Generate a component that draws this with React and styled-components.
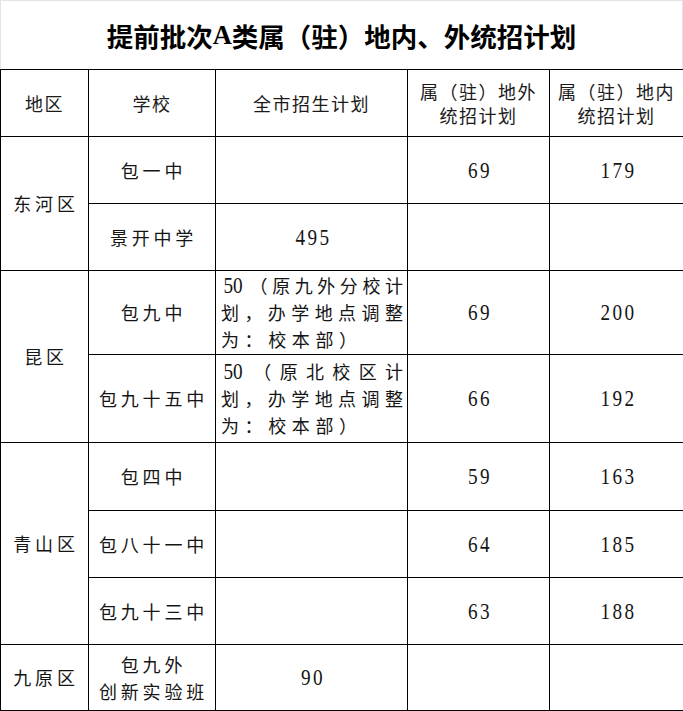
import styled, { createGlobalStyle } from "styled-components";

const GlobalStyle = createGlobalStyle`
  html, body {
    margin: 0;
    padding: 0;
    background: #fff;
  }
`;

const Page = styled.div`
  width: 683px;
  font-family: "Noto Sans CJK SC", sans-serif;
  color: #111;
`;

const Title = styled.h1`
  box-sizing: border-box;
  margin: 0;
  height: 69px;
  border: 1px solid #e4e4e4;
  border-bottom: none;
  display: flex;
  align-items: center;
  justify-content: center;
  font-size: 26.5px;
  font-weight: 700;
  letter-spacing: 0;
  color: #000;

  span {
    font-family: "Liberation Serif", serif;
  }
`;

const Table = styled.table`
  width: 683px;
  border-collapse: collapse;
  table-layout: fixed;
`;

const Th = styled.th`
  border: 1px solid #000;
  padding: 0;
  font-weight: 400;
  font-size: 18px;
  line-height: 24px;
  letter-spacing: 1.5px;
  color: #1a1a1a;
  text-align: center;
`;

const Row = styled.tr`
  height: ${(p) => p.$h}px;
`;

const Td = styled.td`
  border: 1px solid #000;
  padding: 0 0 0 3px;
  font-size: 18px;
  line-height: 27px;
  letter-spacing: 3.8px;
  text-align: center;
  vertical-align: middle;
  color: #151515;
`;

const Num = styled.span`
  display: inline-block;
  font-family: "Liberation Serif", serif;
  font-size: 24px;
  letter-spacing: ${(p) => (p.$tight ? "0" : "3px")};
  transform: scaleX(0.8);
  color: #151515;
`;

const Para = styled.div`
  padding: 0 4px 0 2px;
  display: flex;
  flex-direction: column;
`;

const Line = styled.div`
  display: flex;
  align-items: baseline;
  justify-content: ${(p) => (p.$last ? "flex-start" : "space-between")};
  gap: ${(p) => (p.$last ? "5.6px" : "0")};
  height: 27px;
  letter-spacing: 0;
`;

const splitChars = (line) => {
  const out = [];
  const m = line.match(/^(\d+)(.*)$/);
  if (m) {
    out.push(
      <Num key="n" $tight>
        {m[1]}
      </Num>
    );
    line = m[2];
  }
  [...line].forEach((c, i) => out.push(<span key={i}>{c}</span>));
  return out;
};

const Note = ({ lines }) => (
  <Para>
    {lines.map((l, i) => (
      <Line key={i} $last={i === lines.length - 1}>
        {splitChars(l)}
      </Line>
    ))}
  </Para>
);

const rows = [
  { district: "东河区", span: 2, school: ["包一中"], out: "69", inner: "179", h: 67 },
  { school: ["景开中学"], city: "495", h: 67 },
  {
    district: "昆区",
    span: 2,
    school: ["包九中"],
    note: ["50（原九外分校计", "划，办学地点调整", "为：校本部）"],
    out: "69",
    inner: "200",
    h: 84,
  },
  {
    school: ["包九十五中"],
    note: ["50（原北校区计", "划，办学地点调整", "为：校本部）"],
    out: "66",
    inner: "192",
    h: 88,
  },
  { district: "青山区", span: 3, school: ["包四中"], out: "59", inner: "163", h: 68 },
  { school: ["包八十一中"], out: "64", inner: "185", h: 67 },
  { school: ["包九十三中"], out: "63", inner: "188", h: 67 },
  { district: "九原区", span: 1, school: ["包九外", "创新实验班"], city: "90", h: 66 },
];

export default function App() {
  return (
    <Page>
      <GlobalStyle />
      <Title>
        提前批次<span>A</span>类属（驻）地内、外统招计划
      </Title>
      <Table>
        <colgroup>
          <col style={{ width: 88 }} />
          <col style={{ width: 127 }} />
          <col style={{ width: 192 }} />
          <col style={{ width: 142 }} />
          <col style={{ width: 134 }} />
        </colgroup>
        <thead>
          <Row $h={67}>
            <Th>地区</Th>
            <Th>学校</Th>
            <Th>全市招生计划</Th>
            <Th>
              属（驻）地外
              <br />
              统招计划
            </Th>
            <Th>
              属（驻）地内
              <br />
              统招计划
            </Th>
          </Row>
        </thead>
        <tbody>
          {rows.map((r, i) => (
            <Row key={i} $h={r.h}>
              {r.district && <Td rowSpan={r.span}>{r.district}</Td>}
              <Td>
                {r.school.map((s, j) => (
                  <div key={j}>{s}</div>
                ))}
              </Td>
              <Td>
                {r.note ? <Note lines={r.note} /> : r.city && <Num>{r.city}</Num>}
              </Td>
              <Td>{r.out && <Num>{r.out}</Num>}</Td>
              <Td>{r.inner && <Num>{r.inner}</Num>}</Td>
            </Row>
          ))}
        </tbody>
      </Table>
    </Page>
  );
}
